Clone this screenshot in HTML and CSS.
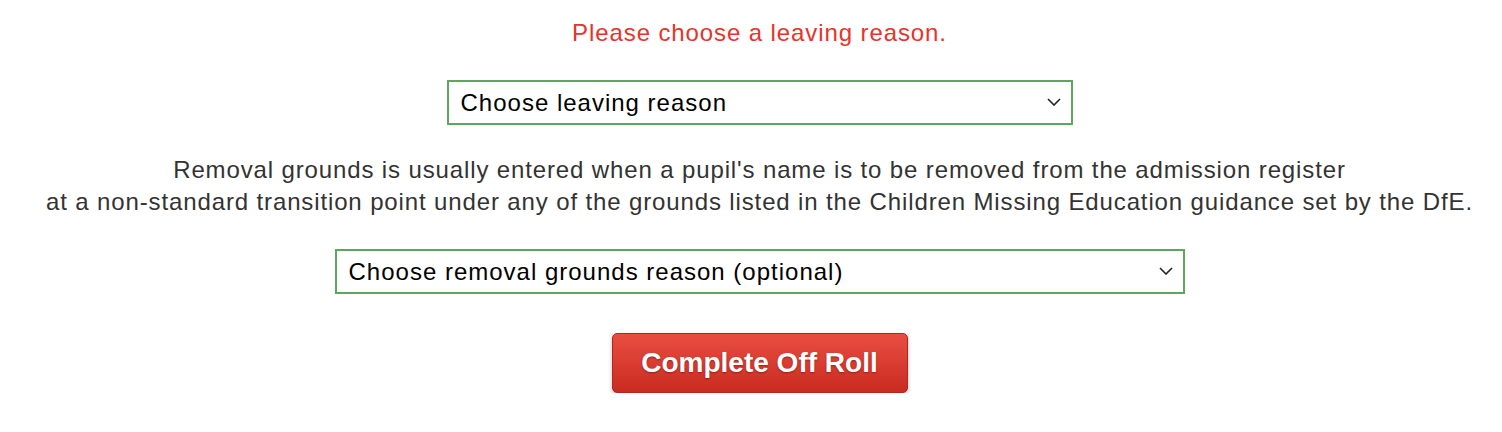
FILE: index.html
```html
<!DOCTYPE html>
<html lang="en">
<head>
    <meta charset="UTF-8">
    <meta name="viewport" content="width=device-width, initial-scale=1.0">
    <title>Off Roll</title>
    <link rel="stylesheet" href="styles.css">
</head>
<body>

    <div class="off-roll">
        <div class="error-text">Please choose a leaving reason.</div>

        <div class="select-wrap leaving">
            <select class="reason-select">
                <option>Choose leaving reason</option>
            </select>
            <svg class="chevron" width="14" height="8" viewBox="0 0 14 8"><path d="M1 1 L7 7 L13 1" fill="none" stroke="#222" stroke-width="1.6"/></svg>
        </div>

        <p class="help-text">
            Removal grounds is usually entered when a pupil's name is to be removed from the admission register<br>
            at a non-standard transition point under any of the grounds listed in the Children Missing Education guidance set by the DfE.
        </p>

        <div class="select-wrap removal">
            <select class="reason-select">
                <option>Choose removal grounds reason (optional)</option>
            </select>
            <svg class="chevron" width="14" height="8" viewBox="0 0 14 8"><path d="M1 1 L7 7 L13 1" fill="none" stroke="#222" stroke-width="1.6"/></svg>
        </div>

        <button class="complete-button">Complete Off Roll</button>
    </div>

</body>
</html>
```

FILE: styles.css
```css
body {
    font-family: 'Liberation Sans', Arial, sans-serif;
    margin: 0;
    padding: 0;
    background: #fff;
}
.off-roll {
    display: flex;
    flex-direction: column;
    align-items: center;
    padding: 19px 0 0 17px;
}
.error-text {
    color: #e8332a;
    font-size: 24px;
    letter-spacing: 0.9px;
    line-height: 28px;
}
.select-wrap {
    position: relative;
    margin-top: 33px;
}
.select-wrap.leaving {
    width: 626px;
}
.select-wrap.removal {
    width: 850px;
    margin-top: 0;
}
.reason-select {
    appearance: none;
    -webkit-appearance: none;
    width: 100%;
    height: 45px;
    box-sizing: border-box;
    border: 2px solid #5aa85c;
    border-radius: 0;
    background: #fff;
    padding: 0 40px 0 12px;
    font-family: 'Liberation Sans', Arial, sans-serif;
    font-size: 24px;
    letter-spacing: 1px;
    color: #000;
}
/* chevron drawn over the select */
.chevron {
    position: absolute;
    right: 12px;
    top: 18px;
    pointer-events: none;
}
.help-text {
    color: #333;
    font-size: 24px;
    letter-spacing: 0.87px;
    line-height: 32px;
    text-align: center;
    margin: 29px 0 31px;
}
.complete-button {
    margin-top: 39px;
    width: 296px;
    height: 60px;
    border: 1px solid #b3261c;
    border-radius: 5px;
    background: linear-gradient(#e94d40, #c92b20);
    color: #fff;
    font-family: 'Liberation Sans', Arial, sans-serif;
    font-size: 28px;
    font-weight: bold;
    text-shadow: 0 1px 2px rgba(0, 0, 0, 0.35);
    box-shadow: 0 2px 4px rgba(0, 0, 0, 0.25);
    cursor: pointer;
}
```
